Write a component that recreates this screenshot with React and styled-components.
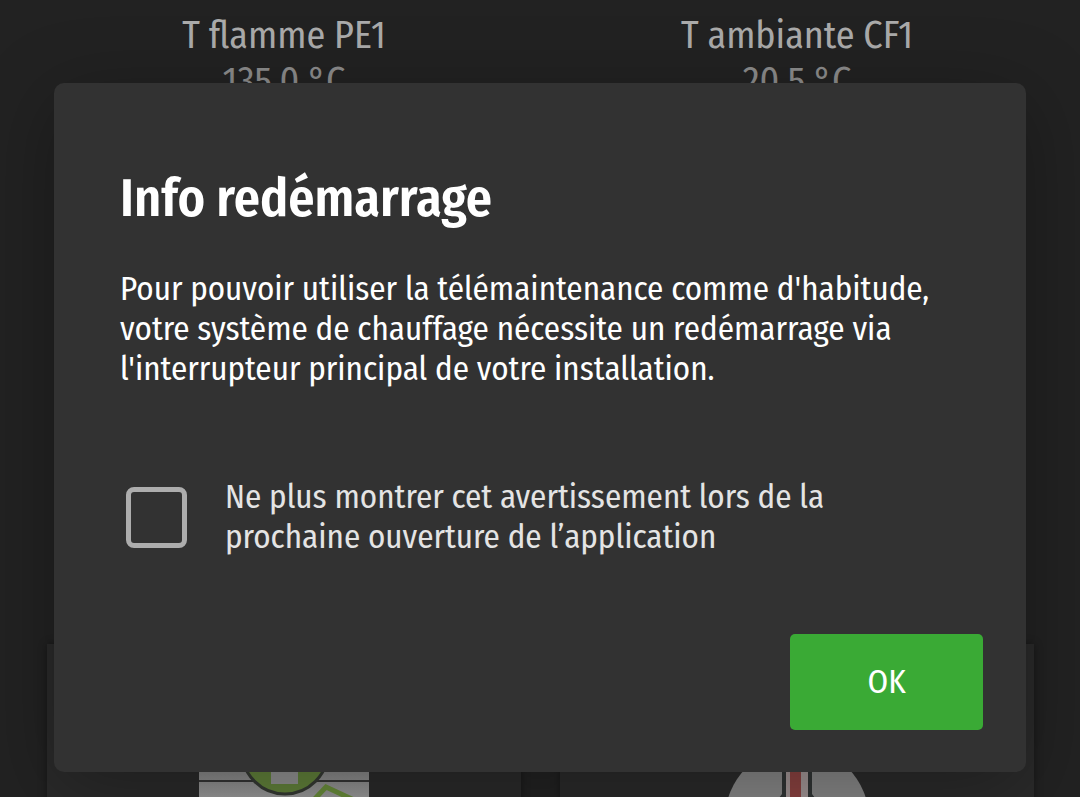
import React from "react";
import styled, { createGlobalStyle } from "styled-components";

const GlobalStyle = createGlobalStyle`
  *, *::before, *::after { box-sizing: border-box; }
  body {
    margin: 0;
    background: #222222;
    font-family: "Fira Sans Condensed", "Liberation Sans Narrow", Lato, sans-serif;
  }
`;

const Screen = styled.div`
  position: relative;
  height: 100vh;
  overflow: hidden;
  background: #222222;
`;

const Dashboard = styled.main`
  display: flex;
  flex-direction: column;
  padding: 12px 46px 0 47px;
`;

const Columns = styled.div`
  display: grid;
  grid-template-columns: 1fr 1fr;
  gap: 39px;
`;

const Readings = styled(Columns)`
  min-height: 632px;
  align-items: start;
`;

const Reading = styled.section`
  text-align: center;
  font-size: 38px;
  line-height: 46px;
`;

const ReadingName = styled.h2`
  margin: 0;
  font: inherit;
  color: #ababab;
`;

const ReadingValue = styled.p`
  margin: 0;
  color: #8c8c8c;
`;

const Card = styled.article`
  display: flex;
  justify-content: center;
  padding: 56px 0;
  background: #2a2a2a;
  box-shadow: 0 0 8px rgba(0, 0, 0, 0.35);
`;

const Overlay = styled.div`
  position: absolute;
  inset: 0;
  display: flex;
  justify-content: center;
  align-items: flex-start;
  padding-top: 83px;
`;

const Dialog = styled.div`
  display: flex;
  flex-direction: column;
  width: 90%;
  padding: 80px 43px 42px 66px;
  border-radius: 10px;
  background: #323232;
  box-shadow: 0 16px 80px rgba(0, 0, 0, 0.3);
`;

const Title = styled.h1`
  margin: 0;
  color: #ffffff;
  font-size: 52px;
  line-height: 72px;
  font-weight: 600;
`;

const Message = styled.p`
  margin: 34px 0 0;
  color: #ffffff;
  font-size: 33px;
  line-height: 40px;
`;

const Option = styled.label`
  display: flex;
  align-items: center;
  gap: 38px;
  margin-top: 88px;
  padding-left: 6px;
  color: #e4e4e4;
  font-size: 33px;
  line-height: 40px;
`;

const Checkbox = styled.input`
  appearance: none;
  flex: none;
  width: 61px;
  height: 61px;
  margin: 0;
  border: 5px solid #adadad;
  border-radius: 8px;
  &:checked { background: #3aaa35; }
`;

const Actions = styled.div`
  display: flex;
  justify-content: flex-end;
  margin-top: 77px;
`;

const Button = styled.button`
  min-width: 193px;
  height: 96px;
  border: 0;
  border-radius: 5px;
  background: #3aaa35;
  color: #ffffff;
  font-family: inherit;
  font-size: 33px;
`;

const readings = [
  { name: "T flamme PE1", value: "135.0 °C" },
  { name: "T ambiante CF1", value: "20.5 °C" },
];

function HeatingDrawing() {
  return (
    <svg width="170" height="160" viewBox="0 0 170 160" aria-hidden="true">
      <defs>
        <linearGradient id="panel" x1="0" y1="0" x2="0" y2="1">
          <stop offset="0.45" stopColor="#858585" />
          <stop offset="0.62" stopColor="#999999" />
        </linearGradient>
      </defs>
      <rect width="170" height="160" fill="url(#panel)" />
      <path d="M0 81H170" stroke="#343434" strokeWidth="2" />
      <circle cx="86" cy="51" r="43" fill="#61803a" stroke="#353933" strokeWidth="3" />
      <rect x="72" y="60" width="27" height="24" fill="#909090" />
      <path d="M110 105L127 87L170 107" fill="none" stroke="#688b3a" strokeWidth="5" />
    </svg>
  );
}

function BoilerDrawing() {
  return (
    <svg width="170" height="160" viewBox="0 0 170 160" aria-hidden="true">
      <defs>
        <linearGradient id="dome" x1="0" y1="0" x2="0" y2="1">
          <stop offset="0.45" stopColor="#858585" />
          <stop offset="0.62" stopColor="#999999" />
        </linearGradient>
      </defs>
      <circle cx="85" cy="119" r="72" fill="url(#dome)" />
      <rect x="74" y="50" width="22" height="110" fill="#a09494" />
      <path d="M72 50V160M98 50V160" stroke="#303434" strokeWidth="4" />
      <path d="M70 94V98L67 98ZM100 94V98L103 98Z" fill="#303434" />
      <rect x="78" y="50" width="11" height="110" fill="#8a4240" />
    </svg>
  );
}

export default function App() {
  return (
    <Screen>
      <GlobalStyle />
      <Dashboard>
        <Readings>
          {readings.map((r) => (
            <Reading key={r.name}>
              <ReadingName>{r.name}</ReadingName>
              <ReadingValue>{r.value}</ReadingValue>
            </Reading>
          ))}
        </Readings>
        <Columns>
          <Card><HeatingDrawing /></Card>
          <Card><BoilerDrawing /></Card>
        </Columns>
      </Dashboard>
      <Overlay>
        <Dialog role="dialog" aria-modal="true" aria-labelledby="restart-title">
          <Title id="restart-title">Info redémarrage</Title>
          <Message>
            Pour pouvoir utiliser la télémaintenance comme d'habitude,<br />
            votre système de chauffage nécessite un redémarrage via<br />
            l'interrupteur principal de votre installation.
          </Message>
          <Option>
            <Checkbox type="checkbox" />
            <span>
              Ne plus montrer cet avertissement lors de la<br />
              prochaine ouverture de l’application
            </span>
          </Option>
          <Actions>
            <Button type="button">OK</Button>
          </Actions>
        </Dialog>
      </Overlay>
    </Screen>
  );
}
